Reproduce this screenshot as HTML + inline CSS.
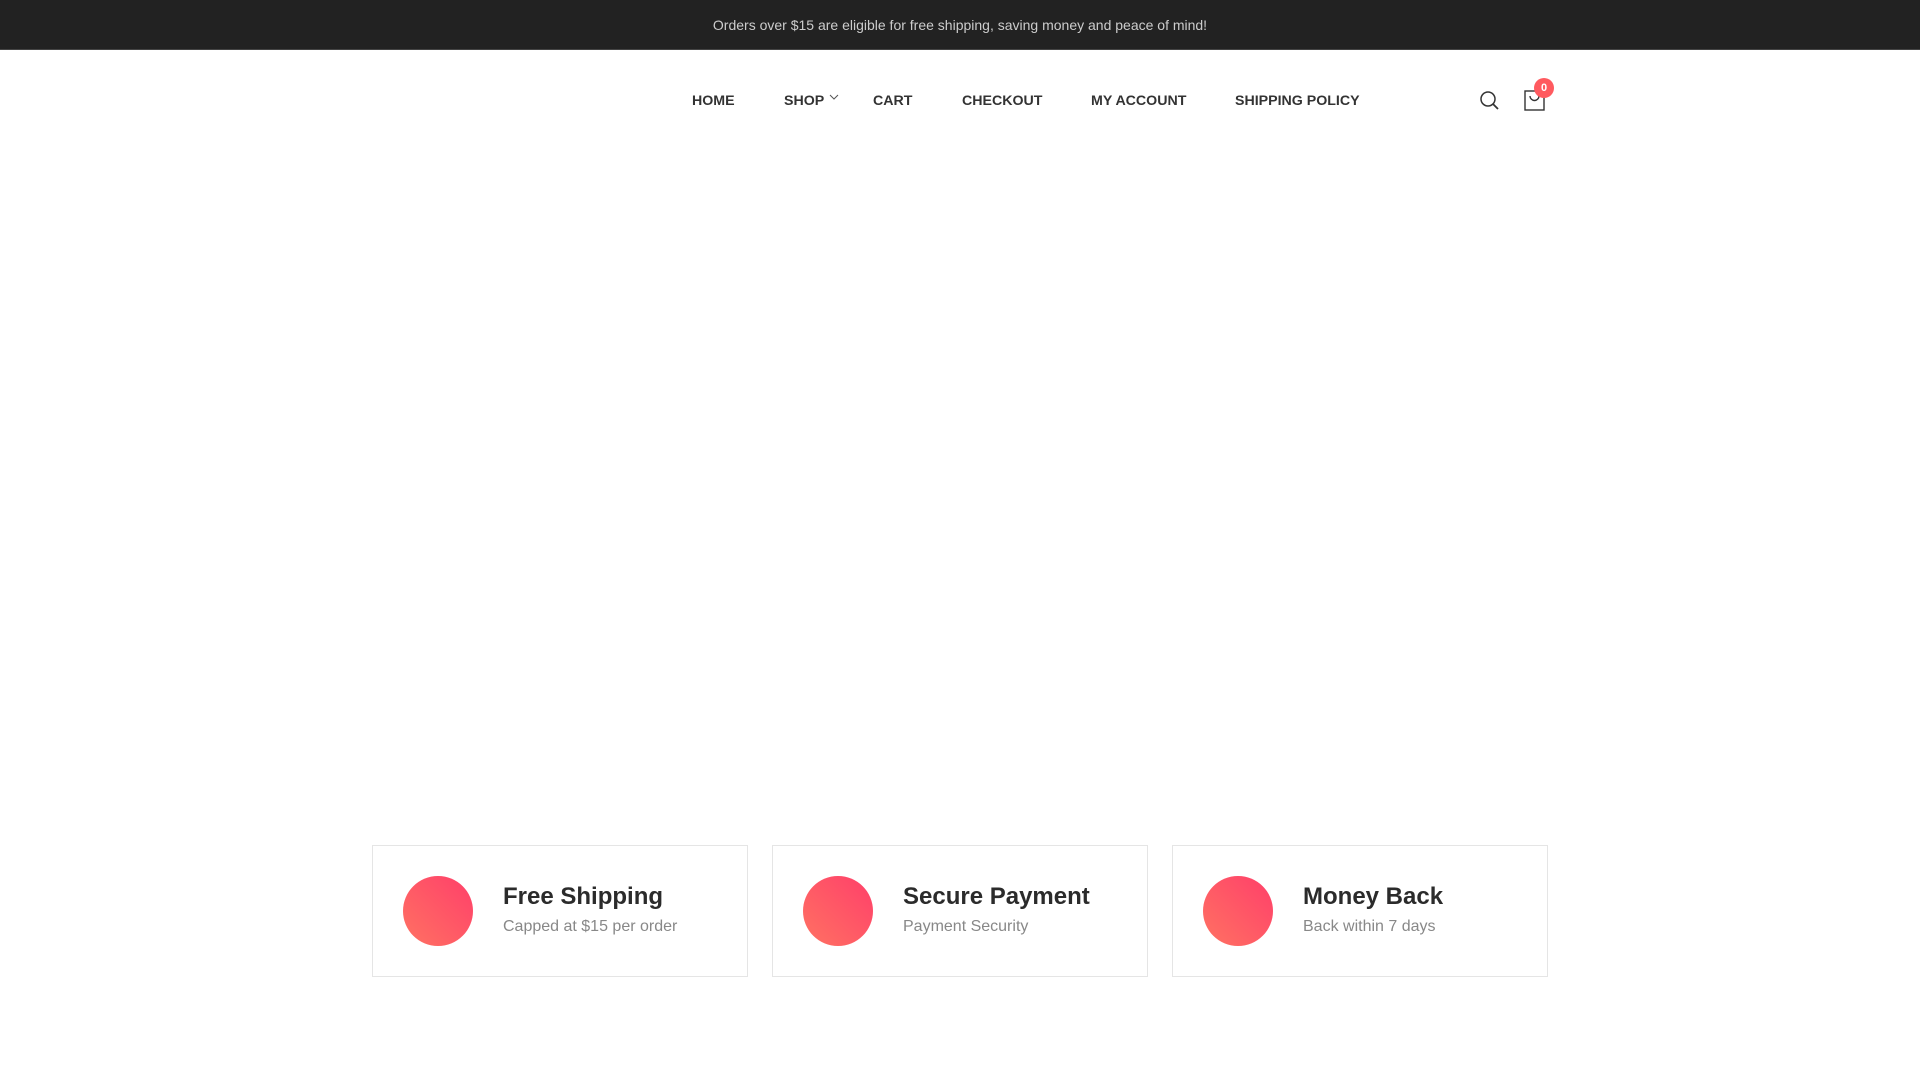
<!DOCTYPE html>
<html><head><meta charset="utf-8"><style>
*{margin:0;padding:0;box-sizing:border-box}
body{width:1920px;height:1080px;background:#fff;font-family:"Liberation Sans",sans-serif;position:relative;overflow:hidden}
.top{height:50px;background:#222;border-bottom:1px solid #444;color:#ccc;font-size:14px;text-align:center;line-height:50px}
.nav a{position:absolute;top:93px;font-size:14.2px;font-weight:bold;color:#333;text-decoration:none}
.box{position:absolute;top:845px;width:376px;height:132px;border:1px solid #e5e5e5}
.c{position:absolute;left:30px;top:30px;width:70px;height:70px;border-radius:50%;background:linear-gradient(45deg,#ff7262,#ff3f6a)}
.t{position:absolute;left:130px;top:37px;font-size:24px;font-weight:bold;color:#2b2b2b}
.s{position:absolute;left:130px;top:72px;font-size:16px;color:#888}
</style></head><body>
<div class="top">Orders over $15 are eligible for free shipping, saving money and peace of mind!</div>
<div class="nav">
<a style="left:692px">HOME</a><a style="left:784px">SHOP</a><a style="left:873px">CART</a><a style="left:962px">CHECKOUT</a><a style="left:1091px">MY ACCOUNT</a><a style="left:1235px">SHIPPING POLICY</a>
</div>
<svg style="position:absolute;left:829px;top:93px" width="10" height="8"><path d="M1 2l4 4 4-4" fill="none" stroke="#555" stroke-width="1"/></svg>
<svg style="position:absolute;left:1478px;top:89px" width="24" height="24"><circle cx="10" cy="10" r="7" fill="none" stroke="#333" stroke-width="1.5"/><path d="M15 15l5 5" stroke="#333" stroke-width="1.8"/></svg>
<svg style="position:absolute;left:1524px;top:90px" width="22" height="22"><rect x="1" y="1" width="19" height="19" fill="none" stroke="#333" stroke-width="1.4"/><path d="M6 6a4.5 4.5 0 0 0 9 0" fill="none" stroke="#333" stroke-width="1.4"/></svg>
<div style="position:absolute;left:1534px;top:78px;width:20px;height:20px;border-radius:50%;background:#ff5a5f;color:#fff;font-size:11px;font-weight:bold;text-align:center;line-height:20px">0</div>
<div class="box" style="left:372px"><div class="c"></div><div class="t">Free Shipping</div><div class="s">Capped at $15 per order</div></div>
<div class="box" style="left:772px"><div class="c"></div><div class="t">Secure Payment</div><div class="s">Payment Security</div></div>
<div class="box" style="left:1172px"><div class="c"></div><div class="t">Money Back</div><div class="s">Back within 7 days</div></div>
</body></html>
